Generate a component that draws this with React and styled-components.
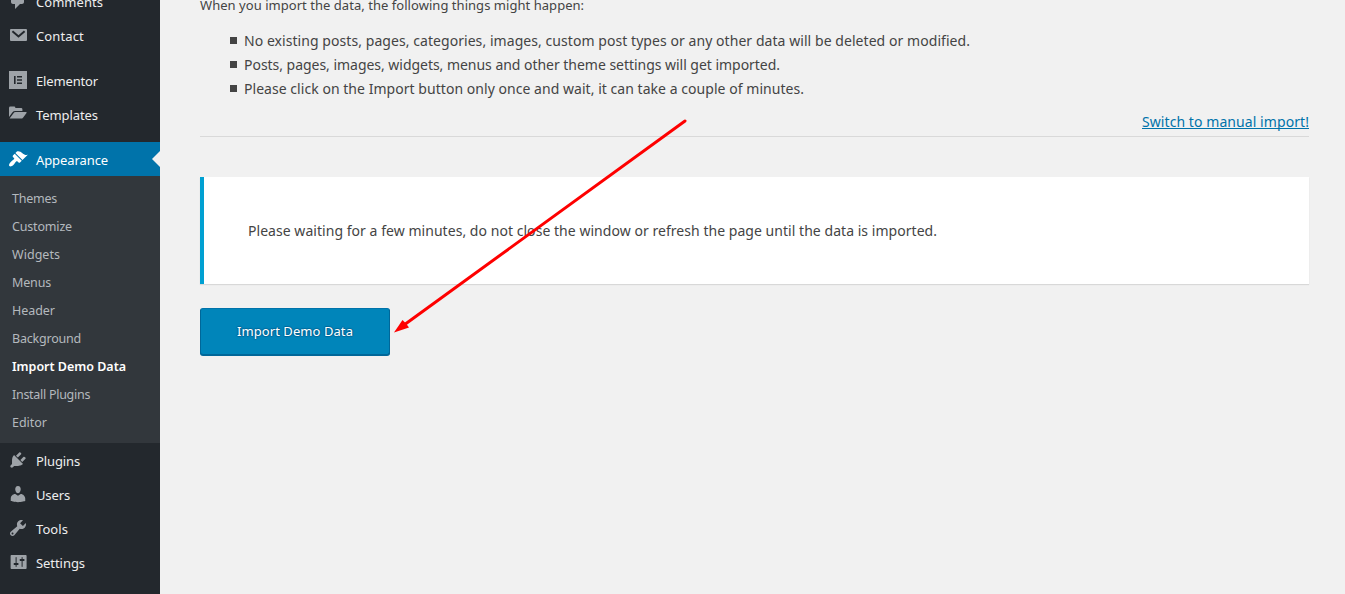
import React from 'react';
import styled, { createGlobalStyle, css } from 'styled-components';

const GlobalStyle = createGlobalStyle`
  * { box-sizing: border-box; }
  body {
    margin: 0;
    background: #f1f1f1;
    color: #444;
    font-family: "Noto Sans", "Open Sans", sans-serif;
    overflow: hidden;
  }
`;

const Screen = styled.div`
  position: relative;
  display: flex;
  height: 594px;
  overflow: hidden;
`;

const Sidebar = styled.nav`
  flex: none;
  width: 160px;
  height: 100%;
  background: #23282d;
  overflow: hidden;
`;

const Menu = styled.div`
  margin-top: -16px;
`;

const Divider = styled.div`
  height: 11px;
`;

const MenuRow = styled.a`
  display: flex;
  align-items: center;
  position: relative;
  height: 34px;
  padding-left: 8px;
  gap: 8px;
  color: ${(p) => (p.$active ? '#fff' : '#eee')};
  background: ${(p) => (p.$active ? '#0073aa' : 'transparent')};
  font-size: 13px;
  line-height: 18px;

  svg {
    flex: none;
    width: 20px;
    height: 20px;
    fill: ${(p) => (p.$active ? '#fff' : '#9ea3a8')};
  }

  ${(p) =>
    p.$active &&
    css`
      &::after {
        content: '';
        position: absolute;
        right: 0;
        top: 9px;
        border: 8px solid transparent;
        border-left: 0;
        border-right-color: #f1f1f1;
      }
    `}
`;

const Tracked = styled.span`
  letter-spacing: ${(p) => p.$track || 0}px;
  white-space: nowrap;
`;

const MenuLabel = styled(Tracked)`
  padding-top: 2px;
`;

const Submenu = styled.div`
  height: 267px;
  padding: 8px 12px 7px;
  background: #32373c;
`;

const SubItem = styled.a`
  display: flex;
  align-items: center;
  height: 28px;
  color: ${(p) => (p.$current ? '#fff' : '#b4b9be')};
  font-size: 12.5px;
  font-weight: ${(p) => (p.$current ? 600 : 400)};
`;

const Main = styled.main`
  flex: 1;
  padding: 0 36px 0 40px;
`;

const Intro = styled.p`
  margin: -5px 0 0;
  font-size: 13px;
  line-height: 20px;
`;

const Notes = styled.ul`
  margin: 13px 0 0;
  padding: 0 0 0 30px;
  list-style: none;
`;

const Note = styled.li`
  display: flex;
  align-items: center;
  gap: 7px;
  height: 24px;
  font-size: 14px;

  &::before {
    content: '';
    width: 7px;
    height: 7px;
    margin-top: 1px;
    background: #444;
  }
`;

const SwitchBar = styled.div`
  display: flex;
  justify-content: flex-end;
  height: 37px;
  padding-top: 10px;
  border-bottom: 1px solid #d9d9d9;
`;

const SwitchLink = styled.a`
  color: #0073aa;
  font-size: 14px;
  line-height: 24px;
  text-decoration: underline;
  text-underline-offset: 1px;
  text-decoration-thickness: 1px;
  text-decoration-skip-ink: none;
`;

const Notice = styled.div`
  display: flex;
  align-items: center;
  height: 107px;
  margin-top: 40px;
  padding-left: 44px;
  border-left: 4px solid #00a0d2;
  background: #fff;
  box-shadow: 0 1px 1px rgba(0, 0, 0, 0.1);
  font-size: 14px;
`;

const ImportButton = styled.button`
  display: block;
  width: 190px;
  height: 47px;
  margin-top: 24px;
  padding: 0 0 1px;
  border: 1px solid;
  border-color: #0073aa #006799 #006799;
  border-radius: 3px;
  background: #0085ba;
  box-shadow: 0 1px 0 #006799;
  color: #fff;
  font-family: inherit;
  font-size: 13px;
  text-shadow: 0 -1px 1px #006799, 1px 0 1px #006799, 0 1px 1px #006799, -1px 0 1px #006799;
`;

const Pointer = styled.svg`
  position: absolute;
  left: 390px;
  top: 115px;
  width: 300px;
  height: 222px;
  pointer-events: none;
`;

const icons = {
  comments: <path d="M5 2h9c1.1 0 2 .9 2 2v7c0 1.1-.9 2-2 2h-2l-5 5v-5H5c-1.1 0-2-.9-2-2V4c0-1.1.9-2 2-2z" />,
  mail: (
    <>
      <rect x="2" y="4" width="17" height="12" rx="1" />
      <path d="M4.4 6.2l6.1 5.2 6.1-5.2" fill="none" stroke="#23282d" strokeWidth="2" />
    </>
  ),
  elementor: (
    <path
      fillRule="evenodd"
      d="M1 1h18v18H1zM6 6v8h1.600V6zM9 6v1.500h5V6zM9 9.250v1.500h5v-1.500zM9 12.500V14h5v-1.500z"
    />
  ),
  folder: (
    <>
      <path d="M1 13V4q0-1.400 1.400-1.400h3.700q1.300 0 1.300 1.300h5.700q1.300 0 1.300 1.300v1.900H7.300q-1.800 0-3 1.400z" />
      <path d="M1.600 14.600l3.700-5.200q.9-1.300 2.400-1.300h10.400q.9 0 .4.8l-3.300 4.500q-.9 1.200-2.400 1.200z" />
    </>
  ),
  brush: (
    <path d="M14.48 11.06L7.41 3.99l1.5-1.5c.5-.56 2.3-.47 3.51.32 1.21.8 1.43 1.28 2.91 2.1 1.18.64 2.45 1.26 4.45.85zm-.71.71L6.7 4.7 4.93 6.47c-.39.39-.39 1.02 0 1.41l1.06 1.06c.39.39.39 1.03 0 1.42-.6.6-1.43 1.11-2.21 1.69-.35.26-.7.53-1.01.84C1.43 14.23.4 16.08 1.4 17.07c.99 1 2.84-.03 4.18-1.36.31-.31.58-.66.85-1.02.57-.78 1.08-1.61 1.69-2.21.39-.39 1.02-.39 1.41 0l1.06 1.06c.39.39 1.02.39 1.41 0z" />
  ),
  plug: (
    <path d="M13.11 4.36L9.87 7.6 8 5.73l3.24-3.24c.35-.34 1.05-.2 1.56.32.52.51.66 1.21.31 1.55zm-8 1.77l.91-1.12 9.01 9.01-1.19.84c-.71.71-2.63 1.16-3.82 1.16H6.14L4.9 17.26c-.59.59-1.54.59-2.12 0-.59-.58-.59-1.53 0-2.12l1.24-1.24v-3.88c0-1.13.4-3.19 1.09-3.89zm7.26 3.97l3.24-3.24c.34-.35 1.04-.21 1.55.31.52.51.66 1.21.31 1.55l-3.24 3.25z" />
  ),
  user: (
    <path d="M10 9.25c-2.27 0-2.73-3.44-2.73-3.44C7 4.02 7.82 2 9.97 2c2.16 0 2.98 2.02 2.71 3.81 0 0-.41 3.44-2.68 3.44zm0 2.57L12.72 10c2.39 0 4.52 2.33 4.52 4.53v2.49s-3.65 1.13-7.24 1.13c-3.65 0-7.24-1.13-7.24-1.13v-2.49c0-2.25 1.94-4.48 4.47-4.48z" />
  ),
  wrench: (
    <path d="M16.68 9.77c-1.34 1.34-3.3 1.67-4.95.99l-5.41 6.52c-.99.99-2.59.99-3.58 0s-.99-2.59 0-3.57l6.52-5.42c-.68-1.65-.35-3.61.99-4.95 1.28-1.28 3.12-1.62 4.72-1.06l-2.89 2.89 2.82 2.82 2.86-2.87c.53 1.58.18 3.39-1.08 4.65zM3.81 16.21c.4.39 1.04.39 1.43 0 .4-.4.4-1.04 0-1.43-.39-.4-1.03-.4-1.43 0-.39.39-.39 1.03 0 1.43z" />
  ),
  sliders: (
    <path
      transform="translate(.6 0)"
      d="M18 16V4c0-.55-.45-1-1-1H3c-.55 0-1 .45-1 1v12c0 .55.45 1 1 1h14c.55 0 1-.45 1-1zM8 11h1c.55 0 1 .45 1 1s-.45 1-1 1H8v1.500c0 .28-.22.5-.5.5s-.5-.22-.5-.5V13H6c-.55 0-1-.45-1-1s.45-1 1-1h1V5.500c0-.28.22-.5.5-.5s.5.22.5.5V11zm5-2h-1c-.55 0-1-.45-1-1s.45-1 1-1h1V5.500c0-.28.22-.5.5-.5s.5.22.5.5V7h1c.55 0 1 .45 1 1s-.45 1-1 1h-1v5.500c0 .28-.22.5-.5.5s-.5-.22-.5-.5V9z"
    />
  ),
};

const submenu = [
  ['Themes', -0.24],
  ['Customize', -0.17],
  ['Widgets', 0.03],
  ['Menus', -0.16],
  ['Header', -0.04],
  ['Background', -0.21],
  ['Import Demo Data', -0.01],
  ['Install Plugins', -0.28],
  ['Editor', -0.02],
];

const notes = [
  ['No existing posts, pages, categories, images, custom post types or any other data will be deleted or modified.', 0.059],
  ['Posts, pages, images, widgets, menus and other theme settings will get imported.', -0.031],
  ['Please click on the Import button only once and wait, it can take a couple of minutes.', 0.041],
];

function MenuItem({ icon, label, track, active }) {
  return (
    <MenuRow $active={active}>
      <svg viewBox="0 0 20 20">{icons[icon]}</svg>
      <MenuLabel $track={track}>{label}</MenuLabel>
    </MenuRow>
  );
}

export default function App() {
  return (
    <Screen>
      <GlobalStyle />
      <Sidebar>
        <Menu>
          <MenuItem icon="comments" label="Comments" track={0.04} />
          <MenuItem icon="mail" label="Contact" track={0.13} />
          <Divider />
          <MenuItem icon="elementor" label="Elementor" track={-0.15} />
          <MenuItem icon="folder" label="Templates" track={-0.08} />
          <Divider />
          <MenuItem icon="brush" label="Appearance" track={-0.09} active />
          <Submenu>
            {submenu.map(([label, track]) => (
              <SubItem key={label} $current={label === 'Import Demo Data'}>
                <Tracked $track={track}>{label}</Tracked>
              </SubItem>
            ))}
          </Submenu>
          <MenuItem icon="plug" label="Plugins" track={-0.12} />
          <MenuItem icon="user" label="Users" track={-0.13} />
          <MenuItem icon="wrench" label="Tools" track={0.07} />
          <MenuItem icon="sliders" label="Settings" track={-0.06} />
        </Menu>
      </Sidebar>
      <Main>
        <Intro>
          <Tracked $track={0.04}>When you import the data, the following things might happen:</Tracked>
        </Intro>
        <Notes>
          {notes.map(([text, track]) => (
            <Note key={text}>
              <Tracked $track={track}>{text}</Tracked>
            </Note>
          ))}
        </Notes>
        <SwitchBar>
          <SwitchLink>
            <Tracked $track={0.072}>Switch to manual import!</Tracked>
          </SwitchLink>
        </SwitchBar>
        <Notice>
          <Tracked $track={0.042}>
            Please waiting for a few minutes, do not close the window or refresh the page until the data is imported.
          </Tracked>
        </Notice>
        <ImportButton>
          <Tracked $track={0.072}>Import Demo Data</Tracked>
        </ImportButton>
      </Main>
      <Pointer viewBox="0 0 300 222">
        <path d="M295 6L14 210" stroke="#fe0000" strokeWidth="3" strokeLinecap="round" />
        <path d="M4 217.500L12.500 205L16 208.500L19 212.500Z" fill="#fe0000" />
      </Pointer>
    </Screen>
  );
}
